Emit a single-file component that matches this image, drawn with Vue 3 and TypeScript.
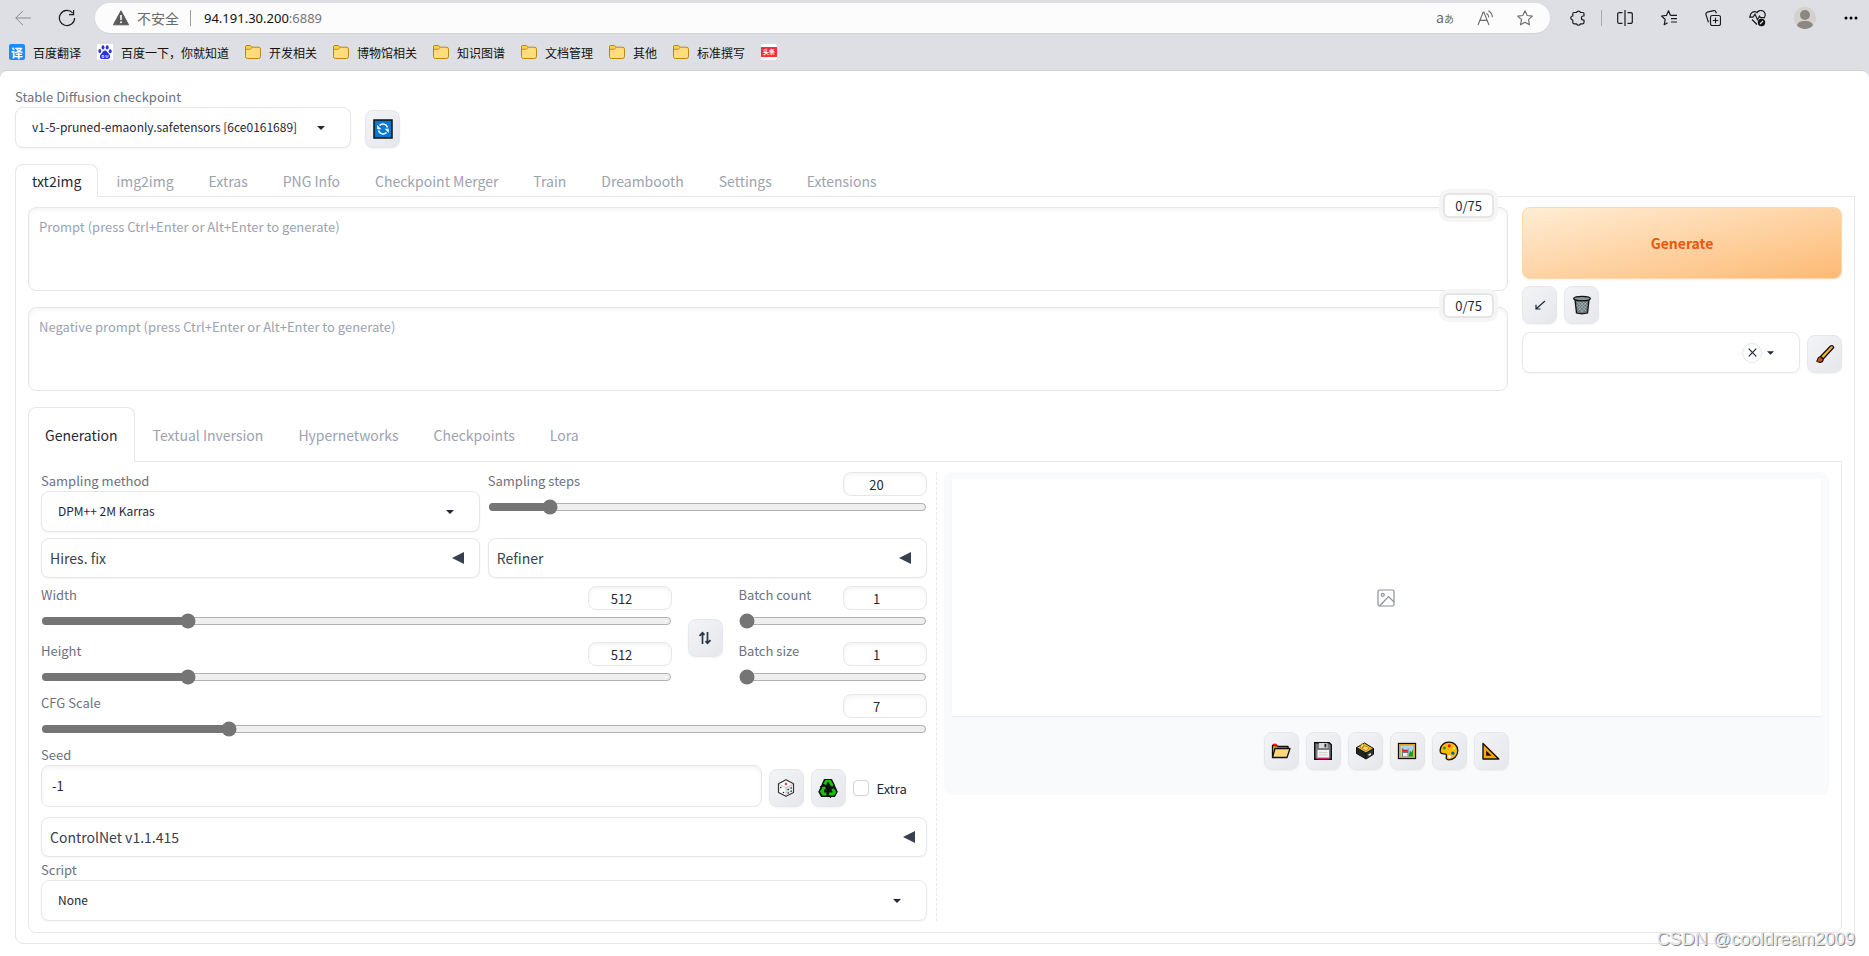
<script setup lang="ts">
import { ref } from 'vue'

const bookmarks = [
  { label: '百度翻译', icon: 'translate' },
  { label: '百度一下，你就知道', icon: 'paw' },
  { label: '开发相关', icon: 'folder' },
  { label: '博物馆相关', icon: 'folder' },
  { label: '知识图谱', icon: 'folder' },
  { label: '文档管理', icon: 'folder' },
  { label: '其他', icon: 'folder' },
  { label: '标准撰写', icon: 'folder' },
  { label: '', icon: 'news' },
]

const mainTabs = ['txt2img', 'img2img', 'Extras', 'PNG Info', 'Checkpoint Merger', 'Train', 'Dreambooth', 'Settings', 'Extensions']
const subTabs = ['Generation', 'Textual Inversion', 'Hypernetworks', 'Checkpoints', 'Lora']
const activeMain = ref('txt2img')
const activeSub = ref('Generation')

const prompt = ref('')
const negative = ref('')
const styles = ref('')
const steps = ref(20)
const width = ref(512)
const height = ref(512)
const batchCount = ref(1)
const batchSize = ref(1)
const cfg = ref(7)
const seed = ref(-1)
const extra = ref(false)

function swap() {
  const w = width.value
  width.value = height.value
  height.value = w
}
</script>

<template>
  <div class="window">
    <header class="chrome">
      <div class="bar">
        <div class="nav">
          <button class="ico" aria-label="Back"><svg width="16" height="16" viewBox="0 0 16 16" fill="none" stroke="#8b8d91" stroke-width="1"><path d="M16 8H.8M8 .8.8 8 8 15.2" /></svg></button>
          <button class="ico" aria-label="Refresh"><svg width="18" height="18" viewBox="0 0 18 18" fill="none" stroke="#1b1b1b" stroke-width="1.2"><path d="M16.6 9A7.6 7.6 0 1 1 14.8 4.1M15.6 1v4.6H11" /></svg></button>
        </div>
        <div class="address">
          <svg class="warn" width="16" height="16" viewBox="0 0 16 16"><path d="M8 .8 15.6 14.8H.4z" fill="#5c5c5c" stroke="#5c5c5c" stroke-linejoin="round" /><path d="M8 5v5" stroke="#fff" stroke-width="1.6" /><circle cx="8" cy="12.2" r="1" fill="#fff" /></svg>
          <span class="insecure">不安全</span>
          <span class="sep"></span>
          <span class="url">94.191.30.200<span class="port">:6889</span></span>
          <span class="address-tools">
            <button class="ico aa" aria-label="Translate">a<small>あ</small></button>
            <button class="ico" aria-label="Read aloud"><svg width="17" height="16" viewBox="0 0 17 16" fill="none" stroke="#6a6a6a" stroke-width="1.1"><path d="M1 15 6.2 2h.6L12 15M3 10.4h7M9.4 3.2q2.2 1.4 2.4 4.2M11.4.8q3.8 2.2 4 6.4" /></svg></button>
            <button class="ico" aria-label="Add to favorites"><svg width="16" height="16" viewBox="0 0 16 16" fill="none" stroke="#6a6a6a" stroke-width="1.1" stroke-linejoin="round"><path d="m8 .8 2.2 4.7 5.1.6-3.8 3.6 1 5.1L8 12.3l-4.5 2.5 1-5.1L.7 6.1l5.1-.6z" /></svg></button>
          </span>
        </div>
        <div class="actions">
          <div class="pair">
            <button class="ico" aria-label="Extensions"><svg width="16" height="16" viewBox="0 0 16 16" fill="none" stroke="#1b1b1b" stroke-width="1.2" stroke-linejoin="round"><path d="M4 2.500h2.500a2.100 2.100 0 0 1 4 0h2.300a1.200 1.200 0 0 1 1.200 1.200V6h-.6a2 2 0 0 0 0 4h.6v2.600a1.200 1.200 0 0 1-1.200 1.200h-2.300a2.100 2.100 0 0 1-4 0H4a1.200 1.200 0 0 1-1.200-1.200V10a2 2 0 0 1 0-4V3.700A1.200 1.200 0 0 1 4 2.500" /></svg></button>
            <span class="sep light"></span>
            <button class="ico" aria-label="Split screen"><svg width="16" height="16" viewBox="0 0 16 16" fill="none" stroke="#1b1b1b" stroke-width="1.2"><path d="M8 0v16M5.500 2.600H2.200a1.500 1.500 0 0 0-1.500 1.500v7.800a1.500 1.500 0 0 0 1.500 1.500h3.300M10.500 2.600h3.300a1.500 1.500 0 0 1 1.500 1.500v7.800a1.500 1.500 0 0 1-1.500 1.500h-3.300" /></svg></button>
          </div>
          <button class="ico" aria-label="Favorites"><svg width="16" height="16" viewBox="0 0 16 16" fill="none" stroke="#1b1b1b" stroke-width="1.2" stroke-linejoin="round"><path d="M9.500 5.400 7.500.8 5.400 5.400.6 6l3.600 3.500-1 5.200 3.400-2M9.500 5.400h6.500M10 8.700h6M10 12h6" /></svg></button>
          <button class="ico" aria-label="Collections"><svg width="16" height="16" viewBox="0 0 16 16" fill="none" stroke="#1b1b1b" stroke-width="1.2"><rect x="5.500" y="5.500" width="10" height="10" rx="1.800" /><path d="M10.500 7.800v5.400M7.800 10.500h5.400M3.400 12.200 1 4.600A2 2 0 0 1 2.300 2.200L8.500.6a2 2 0 0 1 2.400 1.400l.4 1.400" /></svg></button>
          <button class="ico" aria-label="Browser essentials"><svg width="17" height="17" viewBox="0 0 17 17" fill="none" stroke="#1b1b1b" stroke-width="1.200"><path d="M1.400 7A4.200 4.200 0 0 1 8 2.600 4.200 4.200 0 0 1 15.600 7M0 7.200h4l2-3 2.500 5.500 2-3.500 1 1.500H16M3 9.500 8 14.500" /><circle cx="12.500" cy="12.500" r="3.700" fill="#111" stroke="none" /><path d="m11 14 3-3" stroke="#ddd" /></svg></button>
          <button class="ico" aria-label="Profile"><svg width="22" height="22" viewBox="0 0 22 22"><circle cx="11" cy="11" r="11" fill="#d5d1cc" /><circle cx="11" cy="8" r="5" fill="#8c8783" /><path d="M3 18.500C4 14.800 7 14 11 14s7 .8 8 4.500A11 11 0 0 1 3 18.500" fill="#8c8783" /></svg></button>
          <button class="ico" aria-label="Menu"><svg width="14" height="4" viewBox="0 0 14 4"><circle cx="2" cy="2" r="1.500" /><circle cx="7" cy="2" r="1.500" /><circle cx="12" cy="2" r="1.500" /></svg></button>
        </div>
      </div>
      <nav class="bookmarks">
        <a v-for="b in bookmarks" :key="b.label" href="#" :aria-label="b.label || 'News'">
          <span v-if="b.icon === 'translate'" class="fav translate">译</span>
          <svg v-else-if="b.icon === 'paw'" width="16" height="16" viewBox="0 0 16 16"><rect width="16" height="16" rx="1" fill="#fff" /><g fill="#2932e1"><ellipse cx="6" cy="3.400" rx="1.500" ry="2.100" /><ellipse cx="10.200" cy="3.400" rx="1.500" ry="2.100" /><ellipse cx="2.800" cy="7" rx="1.500" ry="2" /><ellipse cx="13.200" cy="7.200" rx="1.500" ry="2" /><path d="M8 6.600c2 0 2.400 2 4 3.400 2 1.800 1.200 5-1.200 5-1.600 0-4-.2-5.600 0C2.800 15 2 11.800 4 10.200 5.600 8.800 6 6.600 8 6.600" /></g><path d="M5 11.500h1.800v2H5.200zM9 11v2.200h2V11" fill="none" stroke="#fff" stroke-width=".7" /></svg>
          <svg v-else-if="b.icon === 'folder'" width="16" height="16" viewBox="0 0 16 16"><path d="M.5 3A1.500 1.500 0 0 1 2 1.500h3.200L7 3.200h6.500a2 2 0 0 1 2 2v7.300a2 2 0 0 1-2 2h-11a2 2 0 0 1-2-2z" fill="#ffdc7c" stroke="#b8860b" /><path d="M1 3.400A1.500 1.500 0 0 1 2.200 2h2.800l1.400 1.500L5 5H1z" fill="#ffd03e" /><path d="M1 5.300h4.200L7 3.500" fill="none" stroke="#b8860b" stroke-width=".9" /></svg>
          <span v-else class="fav news"><span>头条</span></span>
          <span v-if="b.label">{{ b.label }}</span>
        </a>
      </nav>
    </header>

    <main class="page">
      <div class="quick">
        <div class="checkpoint">
          <label class="lbl" for="ckpt">Stable Diffusion checkpoint</label>
          <div class="drop">
            <select id="ckpt"><option>v1-5-pruned-emaonly.safetensors [6ce0161689]</option></select>
            <svg class="caret" width="8" height="4" viewBox="0 0 8 4"><path d="M0 0h8L4 4z" /></svg>
          </div>
        </div>
        <button class="tool" aria-label="Refresh checkpoints"><svg width="20" height="20" viewBox="0 0 20 20"><rect x="1" y="1" width="18" height="18" fill="#0078d7" stroke="#111" stroke-width="1.500" /><path d="M5.500 11.500a4.700 4.700 0 0 0 8 2M14.500 8.500a4.700 4.700 0 0 0-8-2" fill="none" stroke="#fff" stroke-width="1.500" /><path d="M4.200 6v4.200h4.200zM15.800 14V9.800h-4.200z" fill="#fff" /></svg></button>
      </div>

      <div class="tabs" role="tablist">
        <button v-for="t in mainTabs" :key="t" role="tab" :aria-selected="t === activeMain" :class="{ on: t === activeMain }" @click="activeMain = t">{{ t }}</button>
      </div>

      <section class="panel outer">
        <div class="top">
          <div class="prompts">
            <div class="prompt">
              <textarea v-model="prompt" aria-label="Prompt" placeholder="Prompt (press Ctrl+Enter or Alt+Enter to generate)"></textarea>
              <span class="count">0/75</span>
            </div>
            <div class="prompt">
              <textarea v-model="negative" aria-label="Negative prompt" placeholder="Negative prompt (press Ctrl+Enter or Alt+Enter to generate)"></textarea>
              <span class="count">0/75</span>
            </div>
          </div>
          <div class="side">
            <button class="generate">Generate</button>
            <div class="tools">
              <button class="tool" aria-label="Read generation parameters"><svg width="14" height="14" viewBox="0 0 14 14" fill="none" stroke="#1f2937" stroke-width="1.200"><path d="M12 3 3.500 10.500M3 6.800V11h4.500" /></svg></button>
              <button class="tool" aria-label="Clear prompt"><svg width="20" height="20" viewBox="0 0 20 20"><path d="M3 4.500 4.500 18q5.500 1.600 11 0L17 4.500" fill="#69797e" stroke="#111" stroke-width="1.300" /><path d="m5 7 9 9M8 7l6.500 6.500M11.500 7l3.500 3.500M4.800 10.500l6.500 6.500M15 7l-9 9M12 7l-6.500 6.500M8.500 7 5 10.500M15.200 10.500 8.700 17" stroke="#aebbc0" stroke-width=".7" /><ellipse cx="10" cy="3.500" rx="8.300" ry="2.200" fill="#859599" stroke="#111" stroke-width="1.300" /></svg></button>
            </div>
            <div class="styles">
              <div class="combo">
                <input v-model="styles" aria-label="Styles" />
                <button class="clear" aria-label="Clear styles" @click="styles = ''"><svg width="9" height="9" viewBox="0 0 9 9" stroke="#1f2937" stroke-width="1.200"><path d="m.7.7 7.600 7.600M8.300.7.7 8.300" /></svg></button>
                <svg width="7" height="4" viewBox="0 0 8 4"><path d="M0 0h8L4 4z" fill="#1f2937" /></svg>
              </div>
              <button class="tool" aria-label="Edit styles"><svg width="20" height="20" viewBox="0 0 20 20"><path d="M5.500 12.500 15.500 2q2.400-1.200 3.200 1.500L8.200 15z" fill="#ffb900" stroke="#111" stroke-width="1.300" stroke-linejoin="round" /><path d="M1.500 17.300q1-.6 1.200-2.300.6-2 2.800-2.500l2.700 2.500q.2 2.800-2.500 3.300-2 .2-4.200-1" fill="#d1500c" stroke="#111" stroke-width="1.100" /></svg></button>
            </div>
          </div>
        </div>

        <div class="tabs sub" role="tablist">
          <button v-for="t in subTabs" :key="t" role="tab" :aria-selected="t === activeSub" :class="{ on: t === activeSub }" @click="activeSub = t">{{ t }}</button>
        </div>

        <section class="panel inner">
          <div class="settings">
            <div class="two">
              <div>
                <label class="lbl" for="method">Sampling method</label>
                <div class="drop">
                  <select id="method"><option>DPM++ 2M Karras</option></select>
                  <svg class="caret" width="8" height="4" viewBox="0 0 8 4"><path d="M0 0h8L4 4z" /></svg>
                </div>
              </div>
              <div class="slider">
                <div class="head"><label class="lbl" for="steps">Sampling steps</label><input v-model="steps" type="number" aria-label="Sampling steps value" /></div>
                <input id="steps" v-model="steps" type="range" min="1" max="150" />
              </div>
              <button class="accordion"><span>Hires. fix</span><svg width="12" height="12" viewBox="0 0 12 12"><path d="M12 0v12L0 6z" /></svg></button>
              <button class="accordion"><span>Refiner</span><svg width="12" height="12" viewBox="0 0 12 12"><path d="M12 0v12L0 6z" /></svg></button>
            </div>

            <div class="dims">
              <div class="stack size">
                <div class="slider">
                  <div class="head"><label class="lbl" for="w">Width</label><input v-model="width" type="number" aria-label="Width value" /></div>
                  <input id="w" v-model="width" type="range" min="64" max="2048" step="8" />
                </div>
                <div class="slider">
                  <div class="head"><label class="lbl" for="h">Height</label><input v-model="height" type="number" aria-label="Height value" /></div>
                  <input id="h" v-model="height" type="range" min="64" max="2048" step="8" />
                </div>
              </div>
              <button class="tool" aria-label="Switch width and height" @click="swap"><svg width="14" height="14" viewBox="0 0 14 14" fill="none" stroke="#2b3648" stroke-width="1.700"><path d="M4.500 13V2M1.500 4.800 4.500 1.800 6.500 3.800M9.500 1v11M12.500 9.200 9.500 12.200 7.500 10.200" /></svg></button>
              <div class="stack batch">
                <div class="slider">
                  <div class="head"><label class="lbl" for="bc">Batch count</label><input v-model="batchCount" type="number" aria-label="Batch count value" /></div>
                  <input id="bc" v-model="batchCount" type="range" min="1" max="100" />
                </div>
                <div class="slider">
                  <div class="head"><label class="lbl" for="bs">Batch size</label><input v-model="batchSize" type="number" aria-label="Batch size value" /></div>
                  <input id="bs" v-model="batchSize" type="range" min="1" max="8" />
                </div>
              </div>
            </div>

            <div class="slider cfg">
              <div class="head"><label class="lbl" for="cfg">CFG Scale</label><input v-model="cfg" type="number" aria-label="CFG Scale value" /></div>
              <input id="cfg" v-model="cfg" type="range" min="1" max="30" step="0.5" />
            </div>

            <div class="seed">
              <div class="seed-field">
                <label class="lbl" for="seed">Seed</label>
                <input id="seed" v-model="seed" type="number" />
              </div>
              <button class="tool" aria-label="Random seed"><svg width="18" height="18" viewBox="0 0 18 18"><path d="m9 .8 7.500 4v8.700L9 17.300 1.500 13.500V4.800z" fill="#fff" stroke="#333" stroke-width="1.200" stroke-linejoin="round" /><path d="m9 8.800 6.900-3.700v8L9 16.600z" fill="#e2e2e4" /><path d="M2 5.100 9 8.800l7-3.700M9 8.800v7.800" fill="none" stroke="#bbb" stroke-width=".8" /><circle cx="9" cy="5" r="1.300" fill="#e0455a" /><g fill="#222"><circle cx="3.800" cy="8.500" r=".8" /><circle cx="6.500" cy="13.500" r=".8" /><circle cx="11.200" cy="10.500" r=".8" /><circle cx="14.200" cy="9" r=".8" /><circle cx="11.200" cy="14" r=".8" /><circle cx="14.200" cy="12.200" r=".8" /></g></svg></button>
              <button class="tool" aria-label="Reuse seed"><svg width="20" height="20" viewBox="0 0 20 20" stroke="#111" stroke-width="1.200" stroke-linejoin="round"><path d="M6.500 1.500h7l5.500 12-2.500 5h-13L1 14z" fill="#111" /><g fill="#16c60c"><path d="M7 1.500h6l3 5-1 2.500-4-.5 1-1L10 4.500 8.500 8 4.500 6z" /><path d="m16 9.500 3 4.500-2.500 4H12.500V19.500L10 16l2.500-3.500V14H14l-1.500-2.500z" /><path d="M2.500 8.500 7.500 8 9 12l-2-.5-.5 2.500H9V18H4L1.200 13.500 3.500 10z" /></g></svg></button>
              <label class="check"><input v-model="extra" type="checkbox" /><span>Extra</span></label>
            </div>

            <button class="accordion control"><span>ControlNet v1.1.415</span><svg width="12" height="12" viewBox="0 0 12 12"><path d="M12 0v12L0 6z" /></svg></button>

            <label class="lbl" for="script">Script</label>
            <div class="drop">
              <select id="script"><option>None</option></select>
              <svg class="caret" width="8" height="4" viewBox="0 0 8 4"><path d="M0 0h8L4 4z" /></svg>
            </div>
          </div>

          <div class="divider"></div>

          <div class="gallery">
            <div class="preview">
              <svg width="18" height="18" viewBox="0 0 18 18" fill="none" stroke="#8b909b" stroke-width="1.200"><rect x="1" y="1" width="16" height="16" rx="1.500" /><circle cx="5.800" cy="5.800" r="1.500" /><path d="m2.500 17 9-9.500L17 13" /></svg>
            </div>
            <div class="tools centered">
              <button class="tool" aria-label="Open output folder"><svg width="20" height="20" viewBox="0 0 20 20" stroke="#111" stroke-width="1.300" stroke-linejoin="round"><path d="M1.500 16.500V4.500h4l1.500 1h10v2" fill="#f5a800" /><path d="M1.500 16.500 4 7.500h15L16 16.500z" fill="#ffd679" /><path d="M2 4.500V3h3.500v1.500z" fill="#e81224" stroke="#e81224" stroke-width=".6" /></svg></button>
              <button class="tool" aria-label="Save image"><svg width="20" height="20" viewBox="0 0 20 20"><path d="M1.700 1.700h14.600l2 2v14.600H1.700z" fill="#777b80" stroke="#111" stroke-width="1.400" /><rect x="6" y="2" width="8.500" height="5" fill="#d9d9d9" /><rect x="11.500" y="2.800" width="1.800" height="3.500" fill="#222" /><rect x="4.500" y="9" width="11.500" height="9" fill="#f2f2f2" /><path d="M4.500 17.500h11.500" stroke="#e3106c" stroke-width="1.800" /><path d="M6 11.500h8.500M6 13.800h8.500" stroke="#c8c8c8" stroke-width=".8" /></svg></button>
              <button class="tool" aria-label="Save zip"><svg width="20" height="20" viewBox="0 0 20 20" stroke="#111" stroke-linejoin="round"><path d="M1.500 6.500 11 12v6L1.500 12.500z" fill="#222" /><path d="m11 12 7.500-4.500v5.800L11 18z" fill="#333" /><path d="m1.500 6.500 8-4.500 9 5.500L11 12z" fill="#f0b22e" /><path d="m5 6 2.500-4 1.500 3 3 .5 2 2-3 2.500z" fill="#ffd25c" stroke="#9c6a0a" stroke-width=".6" /><path d="M13.500 13.300 16 12v1.800l-2.500 1.300z" fill="#eee" stroke="none" /><path d="m7 6.500 2-1" stroke="#0f9d3a" /></svg></button>
              <button class="tool" aria-label="Send to img2img"><svg width="20" height="20" viewBox="0 0 20 20"><rect x="1.500" y="2.500" width="17" height="15" fill="#fff" stroke="#111" stroke-width="1.300" /><rect x="2.800" y="3.800" width="14.400" height="12.400" fill="#a9d5f5" stroke="#e09a1a" stroke-width="1.400" /><path d="m11.500 15.500 1.500-6 1.500 2 1.500-3.500v7.500z" fill="#16a015" /><path d="M5 6.500 7 9h3.500l1-2.500v9H5z" fill="#777" /><path d="M5.500 9.500h5" stroke="#e81224" stroke-width="1.500" /><path d="M6 12h4.500v3.200H6z" fill="#eee" /></svg></button>
              <button class="tool" aria-label="Send to inpaint"><svg width="20" height="20" viewBox="0 0 20 20"><path d="M10 1.200c5 0 8.800 3.400 8.800 8.300 0 5.500-4 9.300-9 9.300-2.300 0-3-1.200-2.500-3 .5-2.200-.2-3-2-3-2.500.2-4.200-.5-4.200-3.300C1.100 4.500 5 1.200 10 1.200" fill="#ffb900" stroke="#111" stroke-width="1.300" /><circle cx="10.200" cy="4.800" r="1.500" fill="#e81224" /><circle cx="5.500" cy="7" r="1.500" fill="#16a015" /><circle cx="15" cy="7.200" r="1.200" fill="#fff04d" /><circle cx="13.800" cy="12.200" r="1.600" fill="#0a4fe0" /><circle cx="10.500" cy="15.500" r="1.400" fill="#fff" /></svg></button>
              <button class="tool" aria-label="Send to extras"><svg width="20" height="20" viewBox="0 0 20 20"><path d="M2 2.500 17.800 18H2z" fill="#ffa800" stroke="#111" stroke-width="1.400" stroke-linejoin="round" /><path d="M5.200 9.500 10.500 14.800H5.200z" fill="#111" /></svg></button>
            </div>
          </div>
        </section>
      </section>
      <div class="watermark">CSDN @cooldream2009</div>
    </main>
  </div>
</template>

<style>
body {
  margin: 0;
  background: #fff;
}
</style>

<style scoped>
.window {
  --line: #e5e7eb;
  --ink: #1f2937;
  --muted: #6b7280;
  --faint: #9ca3af;
  background: #dddfe4;
  font-family: "Noto Sans CJK SC", "Noto Sans", sans-serif;
  font-size: 13px;
  color: var(--ink);
}
.window * {
  box-sizing: border-box;
}
button, input, select, textarea {
  font: inherit;
  color: inherit;
  margin: 0;
}
button {
  cursor: pointer;
}
svg {
  display: block;
  flex: none;
}

/* browser frame */
.chrome {
  padding-top: 3px;
}
.bar {
  display: flex;
  align-items: center;
  height: 30px;
  padding: 0 11px 0 15px;
}
.nav {
  display: flex;
  align-items: center;
  gap: 27px;
  width: 80px;
}
.ico {
  border: 0;
  padding: 0;
  background: none;
}
.address {
  flex: 1;
  display: flex;
  align-items: center;
  height: 30px;
  padding: 0 17px 0 18px;
  border-radius: 15px;
  background: #fcfcfc;
  box-shadow: 0 1px 1px #d2d4d8;
}
.insecure {
  margin-left: 8px;
  font-size: 14px;
  color: #6a6a6a;
}
.sep {
  width: 1px;
  height: 16px;
  margin: 0 13px 0 11px;
  background: #999;
}
.sep.light {
  margin: 0;
  background: #a9abb0;
}
.url {
  font-family: "Noto Sans", sans-serif;
  color: #111;
}
.port {
  color: #777;
}
.address-tools {
  display: flex;
  align-items: center;
  gap: 23px;
  margin-left: auto;
}
.aa {
  font-size: 14px;
  line-height: 16px;
  color: #6a6a6a;
}
.aa small {
  font-size: 10px;
}
.actions {
  display: flex;
  align-items: center;
  gap: 28px;
  margin-left: 20px;
}
.pair {
  display: flex;
  align-items: center;
  gap: 15px;
}
.bookmarks {
  display: flex;
  align-items: center;
  gap: 16px;
  height: 38px;
  padding: 0 9px;
}
.bookmarks a {
  display: flex;
  align-items: center;
  gap: 8px;
  font-size: 12px;
  color: #111;
  text-decoration: none;
}
.fav {
  display: flex;
  align-items: center;
  justify-content: center;
  width: 16px;
  height: 16px;
  border-radius: 2px;
  color: #fff;
}
.translate {
  background: #1a8cff;
  font-weight: 700;
}
.news {
  background: #fff;
  font-size: 6px;
  font-weight: 700;
}
.news span {
  width: 16px;
  line-height: 10px;
  text-align: center;
  background: #ff2d3a;
}

/* page */
.page {
  padding: 16px 14px 12px 15px;
  border-radius: 7px 7px 0 0;
  background: #fff;
  box-shadow: 0 -1px 0 #cfd1d6;
}
.quick {
  display: flex;
  align-items: flex-end;
  gap: 14px;
}
.checkpoint {
  width: 336px;
}
.lbl {
  display: block;
  line-height: 20px;
  color: var(--muted);
}
.drop {
  display: grid;
  align-items: center;
}
.drop > * {
  grid-area: 1 / 1;
}
.drop select {
  width: 100%;
  height: 41px;
  padding: 0 34px 2px 16px;
  border: 1px solid var(--line);
  border-radius: 8px;
  background: #fff;
  box-shadow: 0 1px 2px #0000000d;
  font-size: 12px;
  appearance: none;
}
.caret {
  justify-self: end;
  margin-right: 26px;
  fill: var(--ink);
  pointer-events: none;
}
.tool {
  display: flex;
  align-items: center;
  justify-content: center;
  flex: none;
  width: 35px;
  height: 38px;
  padding: 0;
  border: 1px solid var(--line);
  border-radius: 8px;
  background: linear-gradient(to bottom right, #f3f4f6, #e5e7eb);
  box-shadow: 0 1px 2px #0000000d;
}

.tabs {
  display: flex;
  gap: 1px;
  position: relative;
  z-index: 1;
  margin-top: 16px;
}
.tabs button {
  height: 33px;
  padding: 0 16px;
  border: 1px solid transparent;
  border-bottom: 0;
  border-radius: 8px 8px 0 0;
  background: none;
  font-size: 14px;
  line-height: 20px;
  color: var(--faint);
}
.tabs .on {
  border-color: var(--line);
  background: #fff;
  color: var(--ink);
}
.tabs.sub button {
  height: 55px;
}
.panel {
  margin-top: -1px;
  border: 1px solid var(--line);
  border-radius: 0 0 8px 8px;
}
.outer {
  padding: 10px 12px 10px;
}

.top {
  display: flex;
  gap: 14px;
}
.prompts {
  flex: 1;
  display: grid;
  gap: 16px;
}
.prompt {
  position: relative;
}
.prompt textarea {
  display: block;
  width: 100%;
  height: 84px;
  padding: 9px 10px;
  border: 1px solid var(--line);
  border-radius: 8px;
  line-height: 20px;
  box-shadow: inset 0 2px 4px #0000000d;
  resize: none;
}
.prompt textarea::placeholder {
  color: var(--faint);
}
.count {
  position: absolute;
  top: -14px;
  right: 14px;
  padding: 0 10px;
  border: 2px solid #e5e5e5;
  border-radius: 6px;
  background: #fff;
  line-height: 21px;
  box-shadow: 0 0 0 4px #f5f5f5;
}
.side {
  width: 320px;
}
.generate {
  width: 100%;
  height: 72px;
  border: 1px solid #fed7aa;
  border-radius: 8px;
  background: linear-gradient(to bottom right, #ffedd5, #fdba74);
  box-shadow: 0 1px 2px #0000000d;
  font-size: 14px;
  font-weight: 700;
  color: #ea580c;
}
.tools {
  display: flex;
  gap: 7px;
  margin-top: 7px;
}
.tools.centered {
  justify-content: center;
  margin-top: 16px;
}
.styles {
  display: flex;
  align-items: flex-end;
  gap: 7px;
  margin-top: 8px;
}
.combo {
  flex: 1;
  min-width: 0;
  display: flex;
  align-items: center;
  gap: 5px;
  height: 41px;
  padding: 0 25px 0 10px;
  border: 1px solid var(--line);
  border-radius: 8px;
  box-shadow: 0 1px 2px #0000000d;
}
.combo input {
  flex: 1;
  min-width: 0;
  border: 0;
  outline: 0;
}
.clear {
  display: flex;
  align-items: center;
  justify-content: center;
  width: 20px;
  height: 20px;
  padding: 0;
  border: 1px solid var(--line);
  border-radius: 50%;
  background: #fff;
}

.inner {
  display: grid;
  grid-template-columns: minmax(0, 1fr) 17px minmax(0, 1fr);
  padding: 9px 12px 11px;
}
.two {
  display: grid;
  grid-template-columns: 1fr 1fr;
  gap: 6px 8px;
}
.head {
  display: flex;
  justify-content: space-between;
  height: 28px;
}
input[type="number"] {
  appearance: textfield;
}
input[type="number"]::-webkit-inner-spin-button {
  appearance: none;
  margin: 0;
}
.head input {
  width: 84px;
  height: 24px;
  margin-top: 1px;
  padding: 0 18px 0 2px;
  border: 1px solid var(--line);
  border-radius: 8px;
  box-shadow: inset 0 2px 4px #0000000d;
  text-align: center;
}
input[type="range"] {
  display: block;
  width: 100%;
  height: 16px;
  accent-color: #757575;
}
.accordion {
  display: flex;
  align-items: center;
  justify-content: space-between;
  width: 100%;
  height: 40px;
  padding: 0 15px 0 8px;
  border: 1px solid var(--line);
  border-radius: 8px;
  background: #fff;
  box-shadow: 0 1px 2px #0000000d;
  font-size: 14px;
  color: #374151;
}
.accordion svg {
  fill: #374151;
}
.dims {
  display: flex;
  align-items: center;
  gap: 16px;
  margin-top: 7px;
}
.stack {
  display: grid;
  gap: 12px;
  padding-bottom: 6px;
}
.dims .tool {
  align-self: flex-end;
  margin-bottom: 32px;
}
.stack {
  padding-bottom: 4px;
}
.size {
  flex: 1;
}
.batch {
  width: 188px;
}
.cfg {
  margin-top: 4px;
}
.seed {
  display: flex;
  align-items: flex-end;
  gap: 7px;
  margin-top: 8px;
}
.seed-field {
  flex: 1;
}
.seed-field input {
  display: block;
  width: 100%;
  height: 42px;
  padding: 0 10px 2px;
  border: 1px solid var(--line);
  border-radius: 8px;
  box-shadow: inset 0 2px 4px #0000000d;
}
.check {
  display: flex;
  align-items: center;
  gap: 8px;
  width: 74px;
  height: 38px;
}
.check input {
  width: 16px;
  height: 16px;
  border: 1px solid #d1d5db;
  border-radius: 4px;
  background: #fff;
  box-shadow: 0 1px 2px #0000000d;
  appearance: none;
}
.check input:checked {
  background: #757575;
}
.control {
  margin: 10px 0 3px;
  padding-right: 11px;
}
.divider {
  margin: 1px 7px 0 0;
  border-right: 1px dashed var(--line);
}
.gallery {
  align-self: start;
  margin-top: 1px;
  padding: 7px 8px 25px;
  border-radius: 8px;
  background: #f9fafb;
}
.preview {
  display: flex;
  align-items: center;
  justify-content: center;
  height: 237px;
  background: #fff;
  box-shadow: 0 1px 1px #0000000d;
}
.watermark {
  position: absolute;
  right: 14px;
  bottom: 5px;
  font-family: "Liberation Sans", Arial, sans-serif;
  font-size: 18px;
  line-height: 24px;
  color: #e8e8e8;
  text-shadow: 1px 1px 0 #888;
}
</style>
